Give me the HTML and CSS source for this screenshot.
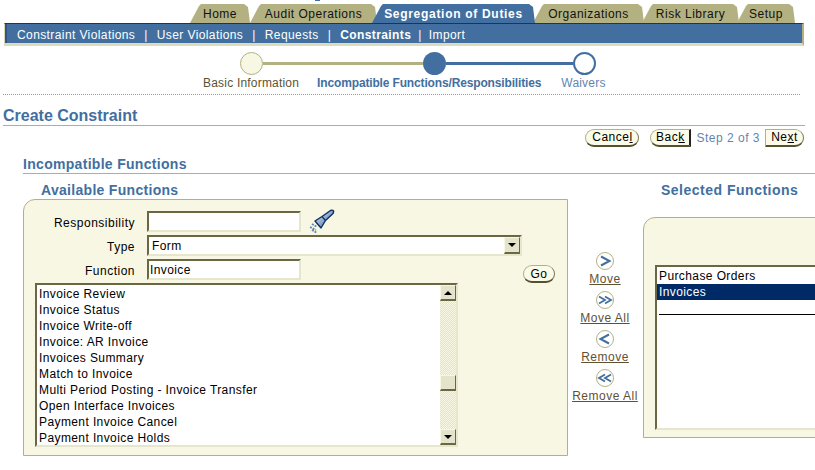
FILE: index.html
```html
<!DOCTYPE html>
<html lang="en">
<head>
    <meta charset="UTF-8">
    <title>Create Constraint</title>
    <link rel="stylesheet" href="styles.css">
</head>
<body>
    <div class="top_mark"></div>
    <div class="tabs">
        <a class="tab tab_home">Home</a>
        <a class="tab tab_audit">Audit Operations</a>
        <a class="tab tab_active">Segregation of Duties</a>
        <a class="tab tab_org">Organizations</a>
        <a class="tab tab_risk">Risk Library</a>
        <a class="tab tab_setup">Setup</a>
    </div>
    <div class="subnav">
        <a>Constraint Violations</a><span class="sep">|</span>
        <a>User Violations</a><span class="sep">|</span>
        <a>Requests</a><span class="sep">|</span>
        <a class="current">Constraints</a><span class="sep sep_last">|</span>
        <a>Import</a>
    </div>

    <div class="train">
        <span class="dot dot_done"></span>
        <span class="rail rail_done"></span>
        <span class="dot dot_now"></span>
        <span class="rail rail_next"></span>
        <span class="dot dot_next"></span>
    </div>
    <div class="train_labels">
        <span class="lbl_done">Basic Information</span>
        <span class="lbl_now">Incompatible Functions/Responsibilities</span>
        <span class="lbl_next">Waivers</span>
    </div>
    <div class="dotted"></div>

    <h1>Create Constraint</h1>
    <div class="actions">
        <button class="btn btn_cancel">Cance<u>l</u></button>
        <button class="btn btn_back">Bac<u>k</u></button>
        <span class="step">Step 2 of 3</span>
        <button class="btn btn_next">Ne<u>x</u>t</button>
    </div>

    <h2>Incompatible Functions</h2>
    <div class="shuttle">
        <div class="col_left">
            <h3>Available Functions</h3>
            <div class="panel panel_left">
                <div class="form">
                    <label>Responsibility</label>
                    <div class="form_row">
                        <input class="field field_short" type="text">
                        <svg class="torch" width="26" height="26" viewBox="0 0 26 26">
                            <defs>
                                <linearGradient id="torch_fill" x1="0" y1="0" x2="1" y2="1">
                                    <stop offset="0" stop-color="#e8eff7"/>
                                    <stop offset="0.5" stop-color="#8faacb"/>
                                    <stop offset="1" stop-color="#2f5c93"/>
                                </linearGradient>
                            </defs>
                            <path d="M6 12 L13 7.5 L21.5 1.5 Q23.5 0.5 24.5 2 Q25 3.5 23.5 5 L16.5 11.5 L12 19 Z" fill="url(#torch_fill)" stroke="#0d2f66" stroke-width="1.4" stroke-linejoin="round"/>
                            <path d="M13 7.5 L16.5 11.5" stroke="#0d2f66" stroke-width="1.2" fill="none"/>
                            <path d="M3 15 L8 18 M1 18 L7 21 M3 21 L8 24" stroke="#5f86b0" stroke-width="1.8" stroke-dasharray="2 1" fill="none"/>
                        </svg>
                    </div>
                    <label>Type</label>
                    <div class="select">
                        <span>Form</span>
                        <span class="arrow_btn"><i class="tri tri_down"></i></span>
                    </div>
                    <label>Function</label>
                    <div class="form_row">
                        <input class="field field_short" type="text" value="Invoice">
                        <button class="btn btn_go">Go</button>
                    </div>
                </div>
                <div class="listbox">
                    <ul class="items">
                        <li>Invoice Review</li>
                        <li>Invoice Status</li>
                        <li>Invoice Write-off</li>
                        <li>Invoice: AR Invoice</li>
                        <li>Invoices Summary</li>
                        <li>Match to Invoice</li>
                        <li>Multi Period Posting - Invoice Transfer</li>
                        <li>Open Interface Invoices</li>
                        <li>Payment Invoice Cancel</li>
                        <li>Payment Invoice Holds</li>
                    </ul>
                    <div class="scrollbar">
                        <span class="arrow_btn"><i class="tri tri_up"></i></span>
                        <span class="track track_top"></span>
                        <span class="arrow_btn thumb"></span>
                        <span class="track track_bottom"></span>
                        <span class="arrow_btn"><i class="tri tri_down"></i></span>
                    </div>
                </div>
            </div>
        </div>

        <div class="moves">
            <a class="move">
                <svg width="20" height="20" viewBox="0 0 20 20"><circle cx="10" cy="10" r="8.5" class="ring"/><path d="M6 5.5 L14.5 10 L6 14.5" class="chev"/></svg>
                <span>Move</span>
            </a>
            <a class="move">
                <svg width="20" height="20" viewBox="0 0 20 20"><circle cx="10" cy="10" r="8.5" class="ring"/><path d="M4 6.5 L10 10 L4 13.5 M10 6.5 L16 10 L10 13.5" class="chev chev_double"/></svg>
                <span>Move All</span>
            </a>
            <a class="move">
                <svg width="20" height="20" viewBox="0 0 20 20"><circle cx="10" cy="10" r="8.5" class="ring"/><path d="M14 5.5 L5.5 10 L14 14.5" class="chev"/></svg>
                <span>Remove</span>
            </a>
            <a class="move">
                <svg width="20" height="20" viewBox="0 0 20 20"><circle cx="10" cy="10" r="8.5" class="ring"/><path d="M10 6.5 L4 10 L10 13.5 M16 6.5 L10 10 L16 13.5" class="chev chev_double"/></svg>
                <span>Remove All</span>
            </a>
        </div>

        <div class="col_right">
            <h3 class="h3_right">Selected Functions</h3>
            <div class="panel panel_right">
                <ul class="items items_selected">
                    <li>Purchase Orders</li>
                    <li class="selected">Invoices</li>
                    <li class="rule_item"></li>
                </ul>
            </div>
        </div>
    </div>
</body>
</html>
```

FILE: styles.css
```css
html, body {
    margin: 0;
    height: 470px;
    overflow: hidden;
}
body {
    font-family: 'Liberation Sans', Arial, sans-serif;
    font-size: 12px;
    letter-spacing: 0.4px;
    background: #fff;
    color: #000;
}
ul {
    list-style: none;
    margin: 0;
    padding: 0;
}

/* top tabs */
.top_mark {
    width: 5px;
    height: 1px;
    margin-left: 315px;
    background: #426f9f;
}
.tabs {
    display: flex;
    height: 19px;
    margin-top: 3px;
    margin-left: 190px;
}
.tab {
    display: flex;
    align-items: center;
    justify-content: center;
    height: 19px;
    background: #b3b182;
    color: #111;
    box-sizing: border-box;
    letter-spacing: 0.5px;
    clip-path: polygon(0 100%, 9px 2px, 11px 0, calc(100% - 6px) 0, calc(100% - 2px) 3px, 100% 100%);
    margin-right: -2px;
}
.tab_home { width: 60px; }
.tab_audit { width: 127px; margin-left: 2px; }
.tab_active {
    width: 163px;
    margin-left: -3px;
    background: #426f9f;
    color: #fff;
    font-weight: bold;
    letter-spacing: 0.7px;
    z-index: 1;
}
.tab_org { width: 111px; }
.tab_risk { width: 97px; }
.tab_setup { width: 58px; }

.subnav {
    display: flex;
    align-items: center;
    box-sizing: border-box;
    width: 800px;
    height: 23px;
    margin-left: 4px;
    padding-left: 12px;
    padding-top: 3px;
    background: #426f9f;
    border-top: 1px solid #12356b;
    border-left: 1px solid #d8d8b4;
    border-right: 2px solid #b3b182;
    border-bottom: 3px solid #dcdcbc;
    box-shadow: inset 2px 0 0 #2f5486;
    color: #fff;
}
.subnav .sep {
    margin: 0 9px;
}
.subnav .sep_last {
    margin: 0 7px;
}
.subnav .current {
    font-weight: bold;
}

/* train */
.train {
    display: flex;
    align-items: center;
    margin-top: 6px;
    margin-left: 240px;
}
.dot {
    box-sizing: border-box;
    width: 23px;
    height: 23px;
    border-radius: 50%;
    flex: none;
}
.dot_done {
    background: #f7f7e3;
    border: 1px solid #b3b182;
}
.dot_now {
    background: #426f9f;
}
.dot_next {
    background: #fff;
    border: 2px solid #426f9f;
}
.rail {
    height: 3px;
}
.rail_done {
    width: 160px;
    background: #b3b182;
}
.rail_next {
    width: 127px;
    background: #426f9f;
}
.train_labels {
    display: flex;
    margin-top: 1px;
    margin-left: 203px;
    height: 14px;
    line-height: 14px;
}
.lbl_done {
    color: #5f5233;
    letter-spacing: 0.2px;
}
.lbl_now {
    margin-left: 18px;
    color: #426f9f;
    font-weight: bold;
    letter-spacing: -0.15px;
}
.lbl_next {
    margin-left: 20px;
    color: #5f86b0;
    letter-spacing: 0.2px;
}
.dotted {
    height: 0;
    margin-top: 4px;
    margin-left: 3px;
    margin-right: 15px;
    border-top: 1px dotted #999;
}

/* headings */
h1 {
    margin: 11px 10px 0 3px;
    padding: 0;
    height: 19px;
    line-height: 19px;
    font-size: 16px;
    color: #426f9f;
    border-bottom: 1px solid #b3b182;
    letter-spacing: 0;
}
h2 {
    margin: 0 0 0 23px;
    height: 18px;
    line-height: 18px;
    font-size: 14px;
    letter-spacing: 0.3px;
    color: #426f9f;
    border-bottom: 1px solid #b3b182;
}
h3 {
    margin: 8px 0 0 18px;
    height: 17px;
    line-height: 17px;
    font-size: 14px;
    letter-spacing: 0.3px;
    color: #426f9f;
    white-space: nowrap;
}
.h3_right {
    letter-spacing: 0.5px;
}

/* buttons */
.actions {
    display: flex;
    align-items: center;
    justify-content: flex-end;
    height: 19px;
    margin-top: 2px;
    margin-bottom: 8px;
    padding-right: 11px;
}
.btn {
    box-sizing: border-box;
    height: 18px;
    padding: 0;
    font-family: inherit;
    font-size: 12px;
    letter-spacing: 0.5px;
    color: #000;
    background: #fbfbea;
    border: 1px solid #b3b182;
    border-bottom: 2px solid #55502f;
    border-right-color: #7d7850;
    border-radius: 9px;
}
.btn_cancel {
    width: 54px;
    margin-right: 11px;
}
.btn_back {
    width: 41px;
    border-radius: 9px 0 0 9px;
    border-right: 2px solid #222;
}
.step {
    margin: 0 5px;
    color: #5f86b0;
    letter-spacing: 0.5px;
}
.btn_next {
    width: 39px;
    border-radius: 0 9px 9px 0;
}
.btn_go {
    width: 32px;
    margin-left: 222px;
    margin-top: 6px;
}

/* shuttle */
.shuttle {
    display: grid;
    grid-template-columns: 545px 75px 172px;
    margin-left: 23px;
}
.panel {
    box-sizing: border-box;
    background: #f7f7e3;
    border: 1px solid #b3b182;
    border-top-left-radius: 12px;
}
.panel_left {
    height: 257px;
    padding: 11px 0 0 11px;
}
.form {
    display: grid;
    grid-template-columns: 100px 1fr;
    column-gap: 12px;
    row-gap: 3px;
    align-items: center;
}
.form label {
    padding-top: 2px;
    text-align: right;
    letter-spacing: 0.5px;
}
.form_row {
    display: flex;
    align-items: flex-start;
    height: 21px;
}
.field, .select, .listbox, .items_selected {
    box-sizing: border-box;
    background: #fff;
    border: 2px solid #e6e6cc;
    border-top-color: #6b6644;
    border-left-color: #6b6644;
}
.field {
    height: 21px;
    padding: 0 1px;
    font-family: inherit;
    font-size: 12px;
    letter-spacing: 0.4px;
    outline: none;
}
.field_short {
    width: 154px;
}
.torch {
    margin-left: 8px;
    margin-top: -2px;
}
.select {
    display: flex;
    align-items: center;
    justify-content: space-between;
    width: 375px;
    height: 21px;
    padding-left: 3px;
}
.arrow_btn {
    box-sizing: border-box;
    display: flex;
    align-items: center;
    justify-content: center;
    width: 16px;
    height: 16px;
    flex: none;
    background: #e4e4cc;
    border: 1px solid #f7f7e3;
    border-right-color: #6b6644;
    border-bottom: 2px solid #6b6644;
}
.select .arrow_btn {
    height: 17px;
}
.tri {
    width: 0;
    height: 0;
    border-left: 4px solid transparent;
    border-right: 4px solid transparent;
}
.tri_down {
    border-top: 4px solid #000;
}
.tri_up {
    border-bottom: 4px solid #000;
}

.listbox {
    display: flex;
    justify-content: space-between;
    width: 423px;
    height: 164px;
    margin-top: 3px;
    overflow: hidden;
}
.items {
    padding-top: 1px;
}
.items li {
    height: 16px;
    line-height: 16px;
    padding-left: 2px;
    white-space: nowrap;
}
.scrollbar {
    display: flex;
    flex-direction: column;
    width: 16px;
}
.track {
    background: repeating-conic-gradient(#f7f7e3 0 25%, #e2e2d0 0 50%) 0 0 / 2px 2px;
}
.track_top {
    height: 75px;
}
.track_bottom {
    height: 38px;
}
.thumb {
    height: 16px;
}

/* move buttons */
.moves {
    display: flex;
    flex-direction: column;
    align-items: center;
    padding-top: 77px;
    gap: 4px;
    margin-left: -1px;
}
.move {
    display: flex;
    flex-direction: column;
    align-items: center;
    height: 35px;
    color: #5f5233;
    letter-spacing: 0.5px;
}
.move span {
    margin-top: 1px;
    line-height: 14px;
    text-decoration: underline;
}
.ring {
    fill: #fff;
    stroke: #b3b182;
    stroke-width: 1;
}
.chev {
    fill: none;
    stroke: #426f9f;
    stroke-width: 2;
}
.chev_double {
    stroke-width: 1.8;
}

/* right side */
.col_right {
    min-width: 0;
}
.panel_right {
    width: 190px;
    height: 221px;
    margin-top: 18px;
    padding-top: 47px;
    padding-left: 11px;
}
.items_selected {
    width: 190px;
    height: 165px;
}
.items_selected .selected {
    background: #002a66;
    color: #fff;
}
.items_selected .rule_item {
    box-sizing: border-box;
    height: 15px;
    margin-left: 2px;
    border-bottom: 1px solid #000;
}
```
